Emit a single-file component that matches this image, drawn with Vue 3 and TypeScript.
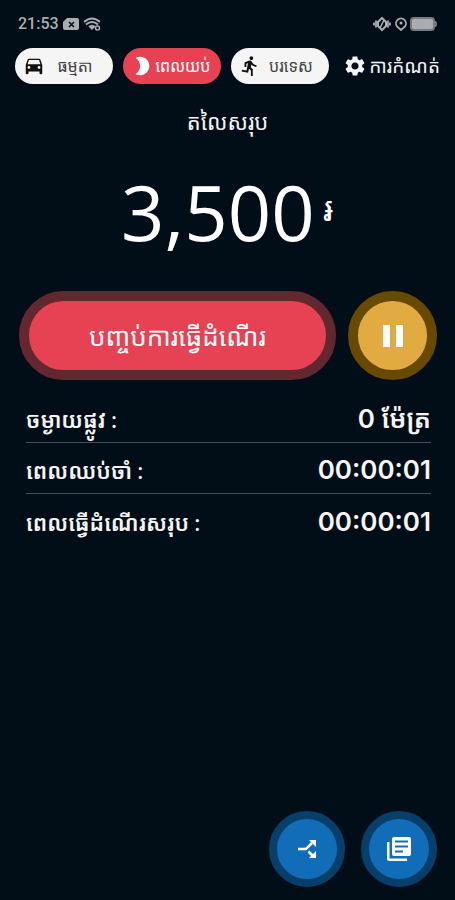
<script setup lang="ts">
import { ref } from 'vue'

interface Mode {
  id: string
  label: string
  icon: string
}

interface Stat {
  label: string
  value: string
}

const modes: Mode[] = [
  {
    id: 'normal',
    label: 'ធម្មតា',
    icon: 'M18.92 5.01C18.72 4.42 18.16 4 17.5 4h-11c-.66 0-1.21.42-1.42 1.01L3 11v9c0 .55.45 1 1 1h1c.55 0 1-.45 1-1v-2h12v2c0 .55.45 1 1 1h1c.55 0 1-.45 1-1v-9l-2.08-5.99zM6.5 15c-.83 0-1.5-.67-1.5-1.5S5.67 12 6.5 12s1.5.67 1.5 1.5S7.33 15 6.5 15zm11 0c-.83 0-1.5-.67-1.5-1.5s.67-1.5 1.5-1.5 1.5.67 1.5 1.5-.67 1.5-1.5 1.5zM5 10l1.5-4.5h11L19 10H5z',
  },
  {
    id: 'night',
    label: 'ពេលយប់',
    icon: 'M10 2c-1.82 0-3.53.5-5 1.35C7.99 5.08 10 8.3 10 12s-2.01 6.92-5 8.65C6.47 21.5 8.18 22 10 22c5.52 0 10-4.48 10-10S15.52 2 10 2z',
  },
  {
    id: 'foreign',
    label: 'បរទេស',
    icon: 'M13.49 5.48c1.1 0 2-.9 2-2s-.9-2-2-2-2 .9-2 2 .9 2 2 2zm-3.6 13.9l1-4.4 2.1 2v6h2v-7.5l-2.1-2 .6-3c1.3 1.5 3.3 2.5 5.5 2.5v-2c-1.9 0-3.5-1-4.3-2.4l-1-1.6c-.4-.6-1-1-1.7-1-.3 0-.5.1-.8.1l-5.2 2.2v4.7h2v-3.4l1.8-.7-1.6 8.1-4.9-1-.4 2 7 1.4z',
  },
]

const activeMode = ref<string>('night')
const paused = ref<boolean>(false)

const stats: Stat[] = [
  { label: 'ចម្ងាយផ្លូវ :', value: '0 ម៉ែត្រ' },
  { label: 'ពេលឈប់ចាំ :', value: '00:00:01' },
  { label: 'ពេលធ្វើដំណើរសរុប :', value: '00:00:01' },
]
</script>

<template>
  <div class="screen">
    <header class="status">
      <div class="status-group">
        <span class="clock">21:53</span>
        <svg class="sim" viewBox="0 0 16 12" aria-hidden="true">
          <path fill="currentColor" d="M4 0h10q2 0 2 2v8q0 2-2 2H2q-2 0-2-2V4z" />
          <path stroke="#020e17" stroke-width="1.5" d="M6 4l5 5M11 4l-5 5" />
        </svg>
        <svg class="wifi" viewBox="0 0 18 14" fill="none" stroke="currentColor" aria-hidden="true">
          <path stroke-width="2" d="M1 5q8-7 16 0M3 7.500q6-5 12 0M6 10q3-2.500 6 0" />
          <path fill="currentColor" stroke="none" d="M6.500 10.500q2.500-2 5 0L9 13z" />
          <circle cx="14.500" cy="11" r="2" stroke-width="1.500" />
        </svg>
      </div>
      <div class="status-group right">
        <svg class="vibrate" viewBox="0 0 20 16" fill="none" stroke="currentColor" aria-hidden="true">
          <path stroke-width="1.800" d="M2 6.500v3M4 4.500v7M16 4.500v7M18 6.500v3" />
          <path stroke-width="2" d="M10 2l4 4v4l-4 4-4-4V6z" />
          <path stroke-width="1.500" d="M12 4L8 12" />
        </svg>
        <svg class="pin" viewBox="0 0 14 16" fill="none" stroke="currentColor" aria-hidden="true">
          <path stroke-width="1.800" d="M7 14l-4-3.500a5 5 0 1 1 8 0z" />
          <circle cx="7" cy="7" r="1.500" fill="currentColor" stroke="none" />
        </svg>
        <svg class="battery" viewBox="0 0 28 14" aria-hidden="true">
          <rect width="25" height="14" rx="4" fill="#777c80" />
          <rect x="2" y="2" width="21" height="10" rx="2" fill="currentColor" />
          <path fill="#777c80" d="M25 4q2 0 2 3t-2 3z" />
        </svg>
      </div>
    </header>

    <nav class="modes">
      <button
        v-for="mode in modes"
        :key="mode.id"
        type="button"
        class="chip"
        :class="[mode.id, { active: activeMode === mode.id }]"
        :aria-pressed="activeMode === mode.id"
        @click="activeMode = mode.id"
      >
        <svg class="chip-icon" viewBox="0 0 24 24" aria-hidden="true">
          <path fill="currentColor" :d="mode.icon" />
        </svg>
        <span class="chip-label">{{ mode.label }}</span>
      </button>
      <button type="button" class="settings">
        <svg class="gear" viewBox="0 0 24 24" aria-hidden="true">
          <path
            fill="currentColor"
            d="M19.140 12.940c.04-.3.06-.61.06-.94 0-.32-.02-.64-.07-.94l2.030-1.580c.18-.14.23-.41.12-.61l-1.920-3.320c-.12-.22-.37-.29-.59-.22l-2.390.96c-.5-.38-1.030-.7-1.620-.94l-.36-2.540c-.04-.24-.24-.41-.48-.41h-3.840c-.24 0-.43.17-.47.41l-.36 2.540c-.59.24-1.130.57-1.620.94l-2.390-.96c-.22-.08-.47 0-.59.22L2.740 8.870c-.12.21-.08.47.12.61l2.030 1.580c-.05.3-.09.63-.09.94s.02.64.07.94l-2.030 1.580c-.18.14-.23.41-.12.61l1.920 3.320c.12.22.37.29.59.22l2.390-.96c.5.38 1.030.7 1.620.94l.36 2.540c.05.24.24.41.48.41h3.840c.24 0 .44-.17.47-.41l.36-2.540c.59-.24 1.130-.56 1.620-.94l2.390.96c.22.08.47 0 .59-.22l1.920-3.320c.12-.22.07-.47-.12-.61l-2.010-1.580zM12 15.600c-1.980 0-3.600-1.620-3.600-3.600s1.620-3.600 3.600-3.600 3.600 1.620 3.600 3.600-1.620 3.600-3.600 3.600z"
          />
        </svg>
        <span>ការកំណត់</span>
      </button>
    </nav>

    <main class="trip">
      <h1 class="title">តលៃសរុប</h1>
      <p class="price">
        <span class="amount">3,500</span>
        <span class="currency">៛</span>
      </p>

      <div class="actions">
        <button type="button" class="finish">បញ្ចប់ការធ្វើដំណើរ</button>
        <button type="button" class="pause" aria-label="ផ្អាក" :aria-pressed="paused" @click="paused = !paused">
          <svg class="pause-icon" viewBox="0 0 20 24" aria-hidden="true">
            <path fill="currentColor" d="M0 1h7v22H0zM13 1h7v22h-7z" />
          </svg>
        </button>
      </div>

      <dl class="stats">
        <div v-for="stat in stats" :key="stat.label" class="stat">
          <dt>{{ stat.label }}</dt>
          <dd>{{ stat.value }}</dd>
        </div>
      </dl>
    </main>

    <footer class="tools">
      <button type="button" class="fab" aria-label="ផ្លូវ">
        <svg class="route" viewBox="0 0 18 18" fill="none" stroke="currentColor" aria-hidden="true">
          <path stroke-width="2.500" d="M0 9h8l6-6M10.500 11.500L14.500 15.500" />
          <path fill="currentColor" stroke="none" d="M11 0h7v7zM18 11v7h-7z" />
        </svg>
      </button>
      <button type="button" class="fab" aria-label="ប្រវត្តិ">
        <svg class="history" viewBox="0 0 24 24" aria-hidden="true">
          <path fill="currentColor" d="M0 5h2.500v16.500H20V24H2.500Q0 24 0 21.500z" />
          <path
            fill="currentColor"
            fill-rule="evenodd"
            d="M7 0h15q2 0 2 2v15q0 2-2 2H7q-2 0-2-2V2q0-2 2-2zM8 3.500v2h13v-2zM8 8.500v2h13v-2zM8 13.500v2h8v-2z"
          />
        </svg>
      </button>
    </footer>
  </div>
</template>

<style>
body {
  margin: 0;
  background: #020e17;
}
</style>

<style scoped>
.screen {
  box-sizing: border-box;
  display: flex;
  flex-direction: column;
  min-height: 100vh;
  padding-bottom: 13px;
  background: #020e17;
  color: #f5f5f5;
  font-family: Lato, 'Noto Sans Khmer', 'Khmer OS', 'Noto Sans', sans-serif;
}

button {
  margin: 0;
  padding: 0;
  border: 0;
  font: inherit;
  color: inherit;
  white-space: nowrap;
  cursor: pointer;
}

svg {
  display: block;
  flex: none;
}

.status {
  display: flex;
  justify-content: space-between;
  align-items: center;
  height: 48px;
  padding: 0 17px 0 18px;
  color: #a9adb0;
}

.status-group {
  display: flex;
  align-items: center;
  gap: 4px;
}

.right {
  gap: 2px;
}

.clock {
  font: 500 16px/20px Roboto, sans-serif;
}

.sim {
  width: 16px;
  height: 12px;
}

.wifi {
  width: 18px;
  height: 14px;
}

.vibrate {
  width: 20px;
  height: 16px;
}

.pin {
  width: 14px;
  height: 16px;
}

.battery {
  width: 28px;
  height: 14px;
}

.modes {
  display: grid;
  grid-template-columns: 98fr 98fr 98fr 101fr;
  gap: 10px;
  padding: 0 15px;
}

.chip {
  display: flex;
  align-items: center;
  height: 36px;
  padding: 0 8px;
  border-radius: 18px;
  background: #f5f5f5;
  color: #111;
  font-size: 16px;
}

.chip-icon {
  width: 22px;
  height: 22px;
}

.chip-label {
  flex: 1;
  text-align: center;
}

.chip:not(.active) .chip-label {
  color: #444;
}

.chip.active {
  background: #e64253;
  color: #fff;
}

.settings {
  display: flex;
  align-items: center;
  justify-content: flex-end;
  gap: 2px;
  background: none;
  font-size: 19px;
}

.gear {
  width: 24px;
  height: 24px;
}

.title {
  margin: 22px 0 0;
  font-size: 22px;
  font-weight: 400;
  line-height: 32px;
  text-align: center;
}

.price {
  display: flex;
  justify-content: center;
  align-items: center;
  gap: 8px;
  margin: 19px 0 0;
  color: #fff;
}

.amount {
  font-family: 'Open Sans', 'Noto Sans', sans-serif;
  font-size: 76px;
  font-weight: 500;
  line-height: 110px;
}

.currency {
  font-size: 34px;
  line-height: 32px;
  padding-bottom: 8px;
}

.actions {
  display: flex;
  gap: 12px;
  margin-top: 24px;
  padding: 0 18px 0 19px;
}

.finish,
.pause {
  box-sizing: border-box;
  height: 89px;
  border: 10px solid #63272f;
  border-radius: 45px;
  background: #e64253;
  color: #fff;
}

.finish {
  flex: 1;
  font-size: 26px;
}

.pause {
  display: grid;
  place-items: center;
  width: 89px;
  border-color: #684900;
  background: #e2ab42;
}

.pause-icon {
  width: 20px;
  height: 24px;
}

.stats {
  margin: 12px 24px 0 26px;
}

.stat {
  display: flex;
  justify-content: space-between;
  align-items: center;
  box-sizing: border-box;
  height: 51px;
  padding-top: 4px;
  border-bottom: 1px solid #4a4d57;
}

.stat:last-child {
  border-bottom: 0;
}

dt {
  font-size: 22px;
  font-weight: 600;
}

dd {
  margin: 0;
  font-family: Inter, 'Noto Sans Khmer', 'Khmer OS', sans-serif;
  font-size: 26px;
  font-weight: 600;
  line-height: 40px;
}

.tools {
  display: flex;
  justify-content: flex-end;
  gap: 16px;
  margin-top: auto;
  padding-right: 18px;
}

.fab {
  box-sizing: border-box;
  display: grid;
  place-items: center;
  width: 76px;
  height: 76px;
  border: 8px solid #073f6b;
  border-radius: 50%;
  background: #126db9;
  color: #fff;
}

.route {
  width: 18px;
  height: 18px;
}

.history {
  width: 24px;
  height: 24px;
}
</style>
